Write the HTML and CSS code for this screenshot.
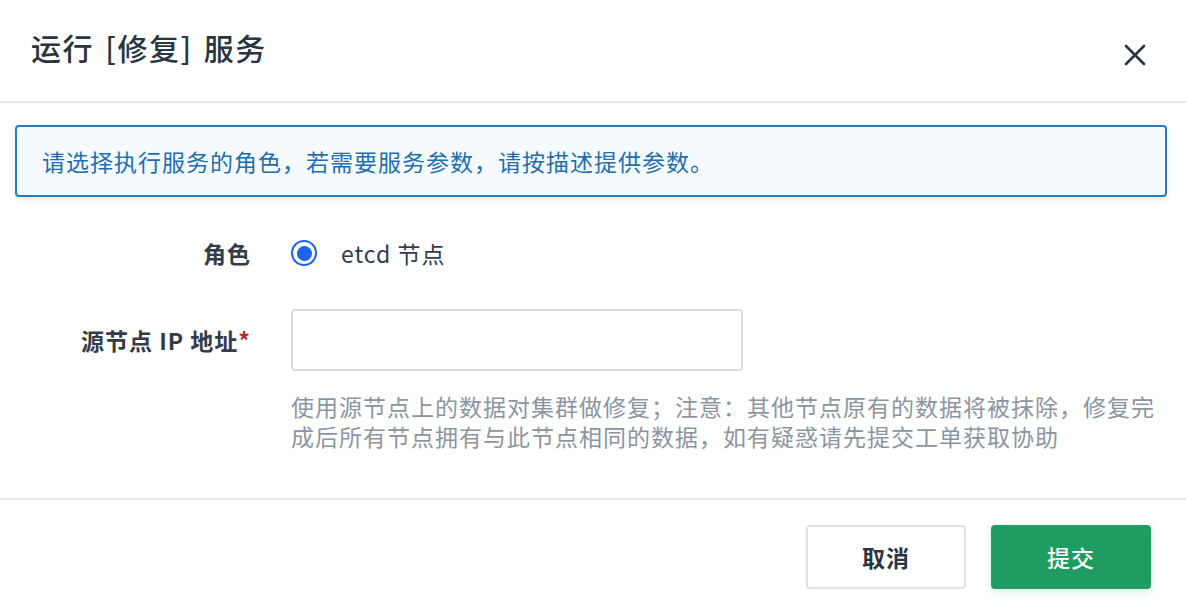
FILE: index.html
```html
<!DOCTYPE html>
<html lang="zh-CN">
<head>
    <meta charset="UTF-8">
    <meta name="viewport" content="width=device-width, initial-scale=1.0">
    <title>运行 [修复] 服务</title>
    <link rel="stylesheet" href="styles.css">
</head>
<body>
    <div class="modal">
        <!-- Header -->
        <div class="modal-header">
            <h2 class="modal-title">运行 [修复] 服务</h2>
            <button class="close-btn" aria-label="关闭">
                <svg width="22" height="22" viewBox="0 0 22 22">
                    <path d="M2 2 L20 20 M20 2 L2 20" stroke="#2a3542" stroke-width="2.6" stroke-linecap="round"/>
                </svg>
            </button>
        </div>

        <!-- Body -->
        <div class="modal-body">
            <div class="alert-info">请选择执行服务的角色，若需要服务参数，请按描述提供参数。</div>

            <div class="form-row role-row">
                <label class="form-label">角色</label>
                <div class="form-control">
                    <label class="radio">
                        <span class="radio-dot"></span>
                        <span class="radio-text">etcd 节点</span>
                    </label>
                </div>
            </div>

            <div class="form-row ip-row">
                <label class="form-label">源节点 IP 地址<span class="required">*</span></label>
                <div class="form-control">
                    <input type="text" class="text-input">
                    <p class="help-text">使用源节点上的数据对集群做修复；注意：其他节点原有的数据将被抹除，修复完成后所有节点拥有与此节点相同的数据，如有疑惑请先提交工单获取协助</p>
                </div>
            </div>
        </div>

        <!-- Footer -->
        <div class="modal-footer">
            <button class="btn btn-default">取消</button>
            <button class="btn btn-primary">提交</button>
        </div>
    </div>
</body>
</html>
```

FILE: styles.css
```css
/* General Styles */
body {
    margin: 0;
    font-family: "Noto Sans CJK SC", "Liberation Sans", sans-serif;
    background-color: #fff;
    color: #2a3542;
}

.modal {
    width: 1186px;
    height: 608px;
    background: #fff;
}

/* Header */
.modal-header {
    height: 103px;
    border-bottom: 2px solid #e4eaee;
    display: flex;
    align-items: center;
    justify-content: space-between;
    padding: 0 40px 0 31px;
    box-sizing: border-box;
}

.modal-title {
    margin: 0;
    font-size: 30px;
    font-weight: 500;
    letter-spacing: 1.5px;
    word-spacing: 3px;
    color: #2a3542;
    position: relative;
    top: -4px;
}

.close-btn {
    background: none;
    border: none;
    padding: 0;
    cursor: pointer;
    display: flex;
    position: relative;
    top: 4px;
}

/* Body */
.modal-body {
    padding: 22px 19px 0 15px;
    height: 395px;
    box-sizing: border-box;
}

.alert-info {
    height: 72px;
    box-sizing: border-box;
    border: 2px solid #2b7bbf;
    border-radius: 4px;
    background-color: #f4faff;
    box-shadow: 0 3px 6px rgba(40, 70, 100, 0.12);
    color: #1f6eb0;
    font-size: 23px;
    letter-spacing: 1px;
    padding: 0 25px;
    display: flex;
    align-items: center;
}

.form-row {
    display: flex;
}

.form-label {
    width: 236px;
    flex-shrink: 0;
    text-align: right;
    font-size: 23px;
    font-weight: 600;
    letter-spacing: 1px;
    color: #333d4a;
    padding-right: 40px;
}

.role-row {
    margin-top: 36px;
    align-items: center;
    height: 40px;
}

.radio {
    display: flex;
    align-items: center;
    gap: 24px;
    cursor: pointer;
}

.radio-dot {
    width: 26px;
    height: 26px;
    box-sizing: border-box;
    border: 2.5px solid #1c64f2;
    border-radius: 50%;
    display: flex;
    align-items: center;
    justify-content: center;
}

.radio-dot::after {
    content: "";
    width: 15px;
    height: 15px;
    border-radius: 50%;
    background: #1c64f2;
}

.radio-text {
    font-size: 23px;
    letter-spacing: 1px;
    color: #333d4a;
}

.ip-row {
    margin-top: 36px;
}

.ip-row .form-label {
    line-height: 62px;
}

.required {
    color: #b8282a;
}

.form-control {
    flex: 1;
}

.text-input {
    display: block;
    width: 452px;
    height: 62px;
    box-sizing: border-box;
    border: 2px solid #d5dde6;
    border-radius: 4px;
    font-size: 20px;
    padding: 0 14px;
    outline: none;
}

.help-text {
    margin: 20px 0 0;
    width: 868px;
    font-size: 23px;
    letter-spacing: 1px;
    line-height: 30px;
    color: #8c959f;
}

/* Footer */
.modal-footer {
    border-top: 2px solid #e4eaee;
    display: flex;
    justify-content: flex-end;
    gap: 25px;
    padding: 25px 35px 0 0;
}

.btn {
    width: 160px;
    height: 64px;
    border-radius: 4px;
    font-family: inherit;
    font-size: 23px;
    font-weight: 600;
    letter-spacing: 1px;
    cursor: pointer;
}

.btn-default {
    background: #fff;
    border: 2px solid #dde3e8;
    color: #2a3542;
}

.btn-primary {
    background: #1e9c61;
    border: none;
    color: #fff;
    font-weight: 500;
    box-shadow: 0 3px 8px rgba(30, 156, 97, 0.18);
}
```
